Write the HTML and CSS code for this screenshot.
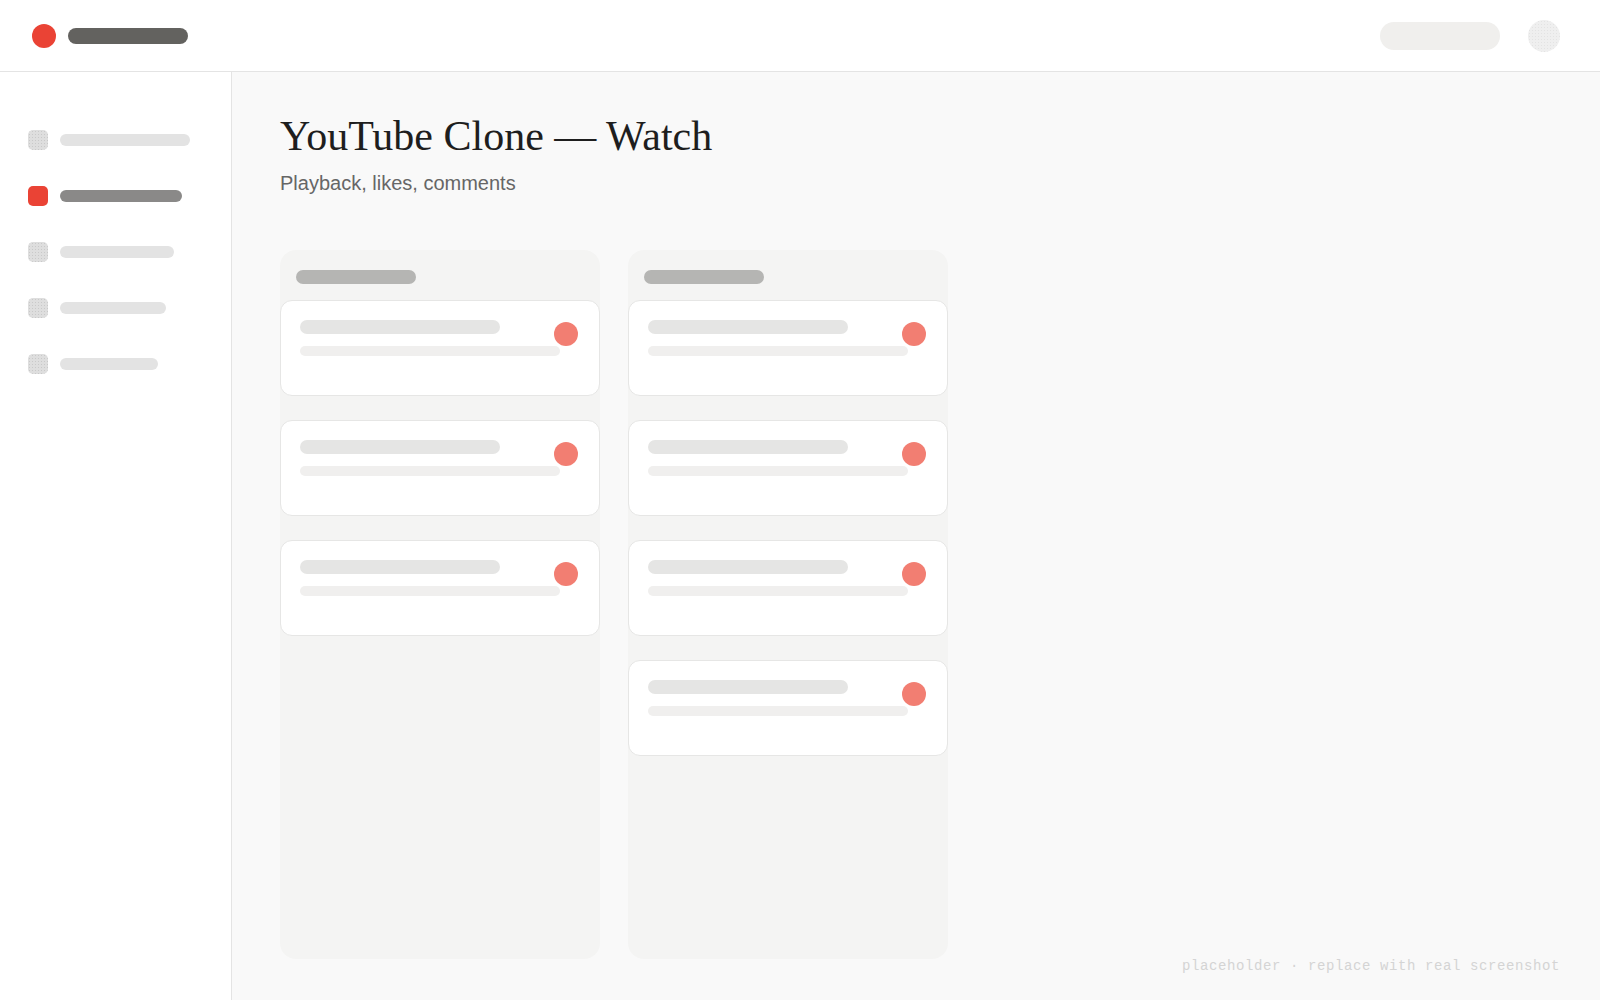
FILE: index.html
```html
<!DOCTYPE html>
<html lang="en">
<head>
<meta charset="utf-8">
<title>YouTube Clone — Watch</title>
<link rel="stylesheet" href="styles.css">
</head>
<body>
<div class="app">
  <header class="topbar">
    <div class="brand">
      <span class="brand-dot"></span>
      <span class="brand-name"></span>
    </div>
    <div class="topbar-right">
      <span class="search-pill"></span>
      <span class="avatar"></span>
    </div>
  </header>
  <div class="body">
    <nav class="sidebar">
      <div class="nav-item"><span class="nav-icon"></span><span class="nav-label w1"></span></div>
      <div class="nav-item active"><span class="nav-icon"></span><span class="nav-label w2"></span></div>
      <div class="nav-item"><span class="nav-icon"></span><span class="nav-label w3"></span></div>
      <div class="nav-item"><span class="nav-icon"></span><span class="nav-label w4"></span></div>
      <div class="nav-item"><span class="nav-icon"></span><span class="nav-label w5"></span></div>
    </nav>
    <main class="main">
      <h1 class="title">YouTube Clone — Watch</h1>
      <p class="subtitle">Playback, likes, comments</p>
      <div class="board">
        <section class="column">
          <div class="column-head"></div>
          <div class="card"><span class="line-a"></span><span class="line-b"></span><span class="card-dot"></span></div>
          <div class="card"><span class="line-a"></span><span class="line-b"></span><span class="card-dot"></span></div>
          <div class="card"><span class="line-a"></span><span class="line-b"></span><span class="card-dot"></span></div>
        </section>
        <section class="column">
          <div class="column-head"></div>
          <div class="card"><span class="line-a"></span><span class="line-b"></span><span class="card-dot"></span></div>
          <div class="card"><span class="line-a"></span><span class="line-b"></span><span class="card-dot"></span></div>
          <div class="card"><span class="line-a"></span><span class="line-b"></span><span class="card-dot"></span></div>
          <div class="card"><span class="line-a"></span><span class="line-b"></span><span class="card-dot"></span></div>
        </section>
      </div>
      <div class="watermark">placeholder · replace with real screenshot</div>
    </main>
  </div>
</div>
</body>
</html>
```

FILE: styles.css
```css
* { box-sizing: border-box; }

html, body {
  margin: 0;
  padding: 0;
  height: 100%;
}

body {
  font-family: "Liberation Sans", Arial, sans-serif;
  background: #f9f9f9;
}

.app {
  display: flex;
  flex-direction: column;
  height: 100vh;
}

/* top bar */
.topbar {
  height: 72px;
  flex: none;
  display: flex;
  align-items: center;
  justify-content: space-between;
  padding: 0 40px 0 32px;
  background: #ffffff;
  border-bottom: 1px solid #e4e4e4;
}

.brand {
  display: flex;
  align-items: center;
  gap: 12px;
}

.brand-dot {
  width: 24px;
  height: 24px;
  border-radius: 50%;
  background: #ea4335;
}

.brand-name {
  width: 120px;
  height: 16px;
  border-radius: 8px;
  background: #63625f;
}

.topbar-right {
  display: flex;
  align-items: center;
  gap: 28px;
}

.search-pill {
  width: 120px;
  height: 28px;
  border-radius: 14px;
  background: #f0efed;
}

.avatar {
  width: 32px;
  height: 32px;
  border-radius: 50%;
  background-color: #efefef;
  background-image: radial-gradient(#e3e3e3 0.6px, transparent 0.8px);
  background-size: 3px 3px;
}

/* layout below the bar */
.body {
  flex: 1;
  display: flex;
  min-height: 0;
}

.sidebar {
  width: 232px;
  flex: none;
  background: #ffffff;
  border-right: 1px solid #e4e4e4;
  padding: 40px 28px;
  display: flex;
  flex-direction: column;
}

.nav-item {
  height: 56px;
  display: flex;
  align-items: center;
  gap: 12px;
}

.nav-icon {
  flex: none;
  width: 20px;
  height: 20px;
  border-radius: 5px;
  background-color: #dedede;
  background-image: radial-gradient(#c9c9c9 0.6px, transparent 0.8px);
  background-size: 3px 3px;
}

.nav-label {
  height: 12px;
  border-radius: 6px;
  background: #e3e3e3;
}

.nav-item.active .nav-icon {
  background: #ea4335;
}

.nav-item.active .nav-label {
  background: #8a8988;
}

.w1 { width: 130px; }
.w2 { width: 122px; }
.w3 { width: 114px; }
.w4 { width: 106px; }
.w5 { width: 98px; }

/* main content */
.main {
  position: relative;
  flex: 1;
  display: flex;
  flex-direction: column;
  padding: 40px 48px 41px;
  background: #f9f9f9;
}

.title {
  margin: 0;
  font-family: "Liberation Serif", "Times New Roman", serif;
  font-weight: 400;
  font-size: 42px;
  line-height: normal;
  color: #1e1e1e;
}

.subtitle {
  margin: 12px 0 0;
  font-size: 20px;
  line-height: normal;
  color: #666666;
}

.board {
  flex: 1;
  margin-top: 55px;
  display: flex;
  align-items: stretch;
  gap: 28px;
}

.column {
  width: 320px;
  background: #f4f4f3;
  border-radius: 16px;
  padding: 20px 0;
  display: flex;
  flex-direction: column;
  gap: 24px;
}

.column-head {
  width: 120px;
  height: 14px;
  border-radius: 7px;
  background: #b5b5b3;
  margin: 0 16px -8px;
}

.card {
  position: relative;
  flex: none;
  height: 96px;
  background: #ffffff;
  border: 1px solid #e6e6e5;
  border-radius: 12px;
  padding: 19px;
  display: flex;
  flex-direction: column;
  align-items: flex-start;
  gap: 12px;
}

.line-a {
  width: 200px;
  height: 14px;
  border-radius: 7px;
  background: #e5e5e4;
}

.line-b {
  width: 260px;
  height: 10px;
  border-radius: 5px;
  background: #f0efee;
}

/* status badge pinned to the card's top-right corner */
.card-dot {
  position: absolute;
  top: 21px;
  right: 21px;
  width: 24px;
  height: 24px;
  border-radius: 50%;
  background: #f27e72;
}

.watermark {
  position: absolute;
  right: 40px;
  bottom: 26px;
  font-family: "Liberation Mono", "Courier New", monospace;
  font-size: 14px;
  letter-spacing: 0.6px;
  color: #d4d4d4;
}
```
